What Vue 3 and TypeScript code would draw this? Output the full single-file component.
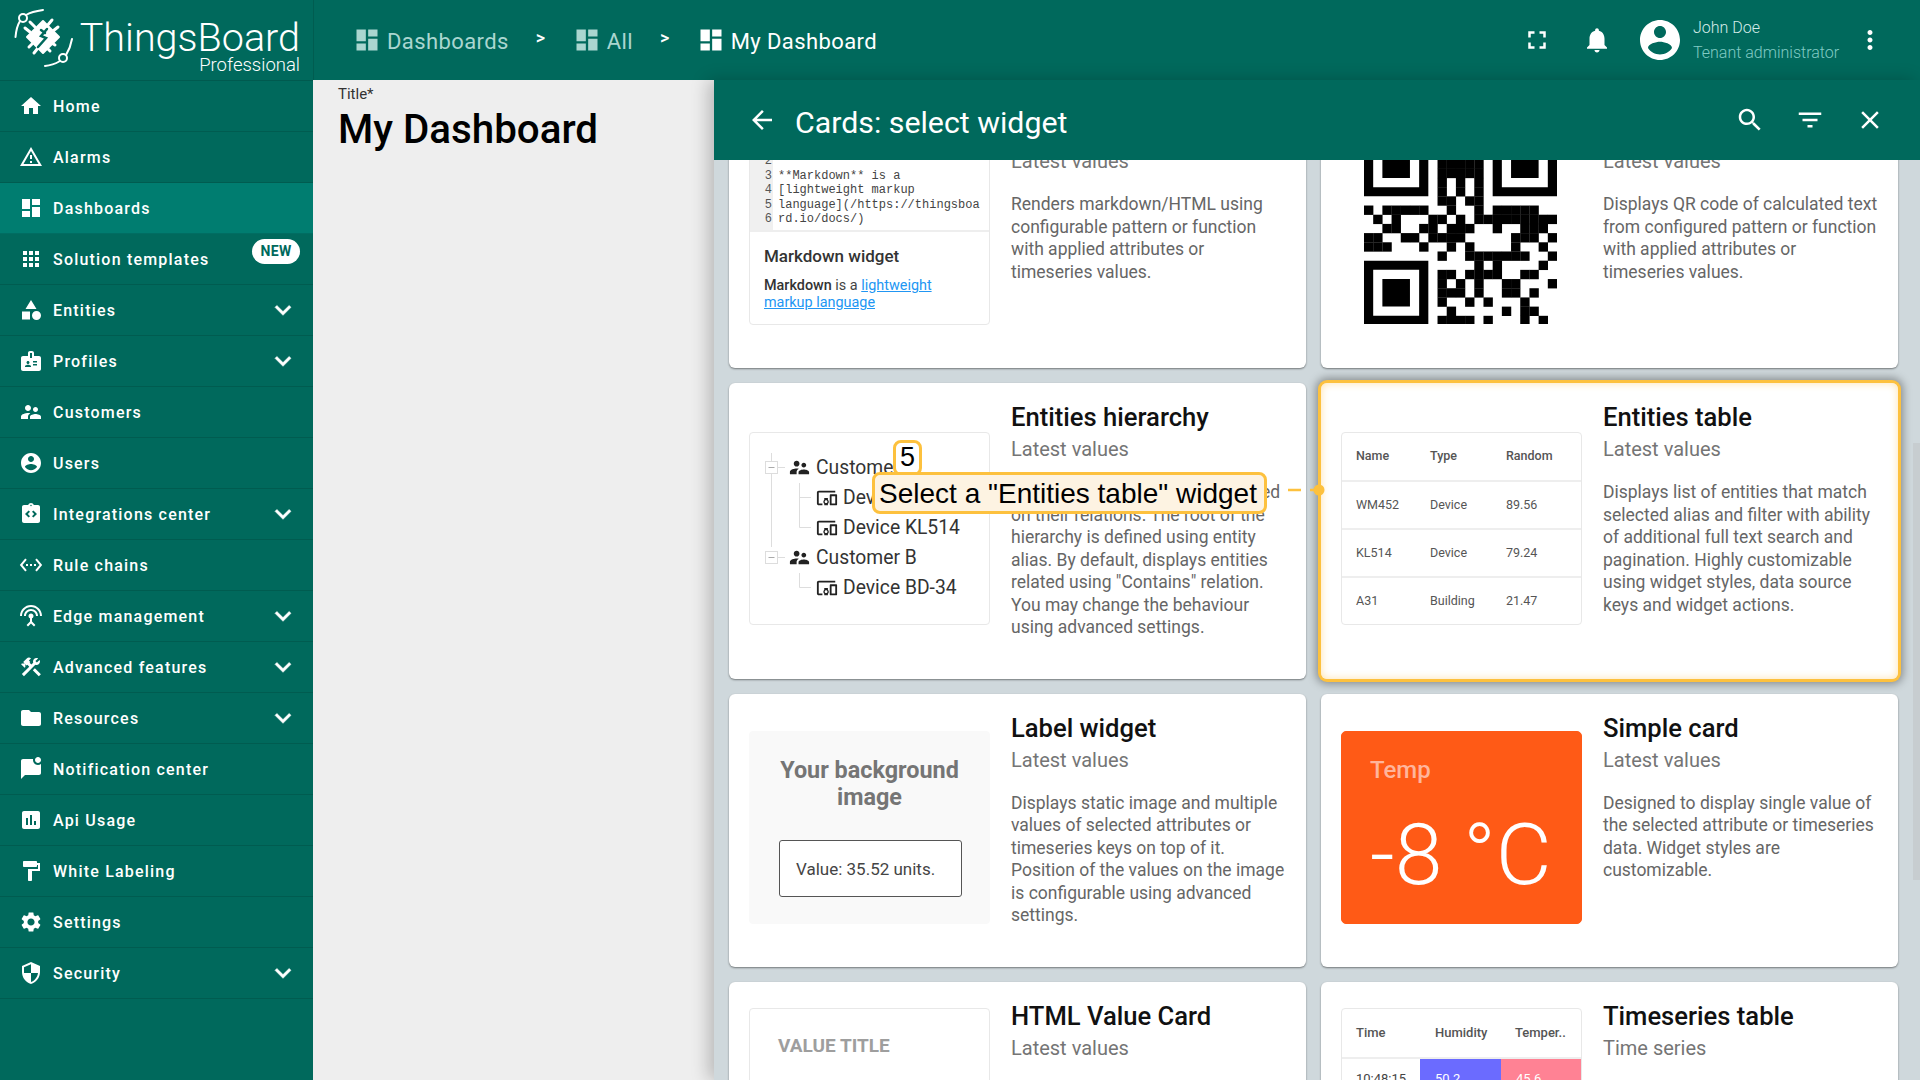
<template>
  <div class="page">
    <aside class="sidebar">
      <div class="brand">
        <svg class="logo" viewBox="14 8 60 60" fill="none" stroke="#fff" stroke-linecap="round">
          <path d="M43 10C36 11 31 12 26 15M20 21C17 26 16 31 15.5 37M45 66C51 65.5 55 64 60 61M66 55C69 50 71 45 72 39" stroke-width="2" />
          <circle cx="23" cy="18" r="4" stroke-width="2" />
          <circle cx="63" cy="58" r="4" stroke-width="2" />
          <path d="M43 21L59 37L43 53L27 37Z" fill="#fff" stroke="#fff" stroke-width="2" stroke-linejoin="round" />
          <path d="M30 22L35 27M25 28L30 32M52 20L47 26M58 27L53 31M29 47L34 42M34 53L38 48M55 45L50 42M50 51L46 47" stroke-width="3" />
          <path d="M47 29L41 36L46 38L38 47M41 30L45 33" stroke="#00695c" stroke-width="2.5" />
        </svg>
        <div class="brand-text">
          <span class="brand-name">ThingsBoard</span>
          <span class="brand-sub">Professional</span>
        </div>
      </div>
      <nav>
        <a v-for="item in menu" :key="item.label" class="nav-item" :class="{ active: item.label === 'Dashboards' }">
          <svg class="nav-icon" viewBox="0 0 24 24"><path :d="item.icon" /></svg>
          <span class="nav-label">{{ item.label }}</span>
          <span v-if="item.label === 'Solution templates'" class="new-badge">NEW</span>
          <svg v-if="item.more" class="chevron" viewBox="0 0 24 24"><path :d="icons.expand" /></svg>
        </a>
      </nav>
    </aside>

    <div class="main">
      <header class="topbar">
        <div class="crumb faded">
          <svg viewBox="0 0 24 24"><path :d="icons.dashboard" /></svg>
          <span>Dashboards</span>
        </div>
        <span class="crumb-sep">&gt;</span>
        <div class="crumb faded">
          <svg viewBox="0 0 24 24"><path :d="icons.dashboard" /></svg>
          <span>All</span>
        </div>
        <span class="crumb-sep">&gt;</span>
        <div class="crumb">
          <svg viewBox="0 0 24 24"><path :d="icons.dashboard" /></svg>
          <span>My Dashboard</span>
        </div>
        <div class="top-actions">
          <button class="icon-btn"><svg viewBox="0 0 24 24"><path :d="icons.fullscreen" /></svg></button>
          <button class="icon-btn"><svg viewBox="0 0 24 24"><path :d="icons.bell" /></svg></button>
          <svg class="avatar" viewBox="0 0 24 24"><path :d="icons.account" /></svg>
          <div class="user">
            <span class="user-name">John Doe</span>
            <span class="user-role">Tenant administrator</span>
          </div>
          <button class="icon-btn"><svg viewBox="0 0 24 24"><path :d="icons.more" /></svg></button>
        </div>
      </header>

      <div class="workspace">
        <section class="dash">
          <label>Title*</label>
          <h1>My Dashboard</h1>
        </section>

        <section class="panel">
          <div class="panel-header">
            <svg class="back" viewBox="0 0 24 24"><path :d="icons.back" /></svg>
            <h2>Cards: select widget</h2>
            <div class="panel-actions">
              <button class="icon-btn"><svg viewBox="0 0 24 24"><path :d="icons.search" /></svg></button>
              <button class="icon-btn"><svg viewBox="0 0 24 24"><path :d="icons.filter" /></svg></button>
              <button class="icon-btn"><svg viewBox="0 0 24 24"><path :d="icons.close" /></svg></button>
            </div>
          </div>

          <div class="content">
            <div class="grid">
              <article v-for="w in widgets" :key="w.title" class="card" :class="{ picked: w.kind === 'entities' }">
                <div class="preview" :class="'p-' + w.kind">
                  <template v-if="w.kind === 'markdown'">
                    <div class="md-code">
                      <div v-for="(line, i) in mdLines" :key="i" class="md-line">
                        <span class="md-num">{{ i + 1 }}</span><span>{{ line }}</span>
                      </div>
                    </div>
                    <div class="md-body">
                      <h4>Markdown widget</h4>
                      <p><b>Markdown</b> is a <a>lightweight<br />markup language</a></p>
                    </div>
                  </template>

                  <svg v-else-if="w.kind === 'qr'" class="qr" viewBox="0 0 21 21">
                    <path d="M0 0h7v7H0zM1 1v5h5V1zM2 2h3v3H2zM14 0h7v7h-7zM15 1v5h5V1zM16 2h3v3h-3zM0 14h7v7H0zM1 15v5h5v-5zM2 16h3v3H2z" fill-rule="evenodd" />
                    <rect v-for="m in qrCells" :key="m.x + '-' + m.y" :x="m.x" :y="m.y" width="1.02" height="1.02" />
                  </svg>

                  <template v-else-if="w.kind === 'tree'">
                    <svg class="tree-lines" viewBox="0 0 241 193" fill="none" stroke="#ddd">
                      <path d="M22.5 21V115M22.5 131V119M28 35.5H36M28 125.5H36M50.5 51V95.5H62M50.5 65.5H62M50.5 141V155.5H62" />
                      <rect x="16.5" y="29.5" width="12" height="12" fill="#fff" />
                      <rect x="16.5" y="119.5" width="12" height="12" fill="#fff" />
                      <path d="M19.5 35.5H25.5M19.5 125.5H25.5" stroke="#aaa" />
                    </svg>
                    <div v-for="row in treeRows" :key="row.name" class="tree-row" :class="{ child: row.child }">
                      <svg viewBox="0 0 24 24"><path :d="row.child ? icons.device : icons.customers" /></svg>
                      <span>{{ row.name }}</span>
                    </div>
                  </template>

                  <table v-else-if="w.kind === 'entities'" class="mini-table">
                    <thead><tr><th>Name</th><th>Type</th><th>Random</th></tr></thead>
                    <tbody>
                      <tr v-for="row in entityRows" :key="row[0]">
                        <td v-for="cell in row" :key="cell">{{ cell }}</td>
                      </tr>
                    </tbody>
                  </table>

                  <template v-else-if="w.kind === 'label'">
                    <div class="label-bg">Your background<br />image</div>
                    <div class="label-box">Value: 35.52 units.</div>
                  </template>

                  <template v-else-if="w.kind === 'simple'">
                    <div class="temp-label">Temp</div>
                    <div class="temp-value">-8 °C</div>
                  </template>

                  <div v-else-if="w.kind === 'html'" class="value-title">VALUE TITLE</div>

                  <template v-else-if="w.kind === 'timeseries'">
                    <div class="ts-head"><span>Time</span><span>Humidity</span><span>Temper..</span></div>
                    <div class="ts-row"><span>10:48:15</span><span class="hum">50.2</span><span class="tmp">45.6</span></div>
                  </template>
                </div>
                <div class="info">
                  <h3>{{ w.title }}</h3>
                  <div class="kind">{{ w.type }}</div>
                  <p>{{ w.desc }}</p>
                </div>
              </article>
            </div>
            <div class="thumb"></div>
          </div>

          <div class="step-badge">5</div>
          <div class="step-tip">Select a "Entities table" widget</div>
          <svg class="step-link" viewBox="0 0 46 14">
            <path d="M5 7H18M27 7H36" stroke="#fdc13e" stroke-width="2.5" />
            <circle cx="36" cy="7" r="5.5" fill="#fdc13e" />
          </svg>
        </section>
      </div>
    </div>
  </div>
</template>

<script setup lang="ts">
import { computed } from 'vue'

const icons = {
  dashboard: 'M3 13h8V3H3v10zm0 8h8v-6H3v6zm10 0h8V11h-8v10zm0-18v6h8V3h-8z',
  expand: 'M16.59 8.59L12 13.17 7.41 8.59 6 10l6 6 6-6z',
  fullscreen: 'M7 14H5v5h5v-2H7v-3zm-2-4h2V7h3V5H5v5zm12 7h-3v2h5v-5h-2v3zM14 5v2h3v3h2V5h-5z',
  bell: 'M12 22c1.1 0 2-.9 2-2h-4c0 1.1.89 2 2 2zm6-6v-5c0-3.07-1.64-5.64-4.5-6.32V4c0-.83-.67-1.5-1.5-1.5s-1.5.67-1.5 1.5v.68C7.63 5.36 6 7.92 6 11v5l-2 2v1h16v-1l-2-2z',
  account: 'M12 2C6.48 2 2 6.48 2 12s4.48 10 10 10 10-4.48 10-10S17.52 2 12 2zm0 3c1.66 0 3 1.34 3 3s-1.34 3-3 3-3-1.34-3-3 1.34-3 3-3zm0 14.2c-2.5 0-4.71-1.28-6-3.22.03-1.99 4-3.08 6-3.08 1.99 0 5.97 1.09 6 3.08-1.29 1.94-3.5 3.22-6 3.22z',
  more: 'M12 8c1.1 0 2-.9 2-2s-.9-2-2-2-2 .9-2 2 .9 2 2 2zm0 2c-1.1 0-2 .9-2 2s.9 2 2 2 2-.9 2-2-.9-2-2-2zm0 6c-1.1 0-2 .9-2 2s.9 2 2 2 2-.9 2-2-.9-2-2-2z',
  back: 'M20 11H7.83l5.59-5.59L12 4l-8 8 8 8 1.41-1.41L7.83 13H20v-2z',
  search: 'M15.5 14h-.79l-.28-.27C15.41 12.59 16 11.11 16 9.5 16 5.91 13.09 3 9.5 3S3 5.91 3 9.5 5.91 16 9.5 16c1.61 0 3.09-.59 4.23-1.57l.27.28v.79l5 4.99L20.49 19l-4.99-5zm-6 0C7.01 14 5 11.99 5 9.5S7.01 5 9.5 5 14 7.01 14 9.5 11.99 14 9.5 14z',
  filter: 'M10 18h4v-2h-4v2zM3 6v2h18V6H3zm3 7h12v-2H6v2z',
  close: 'M19 6.41L17.59 5 12 10.59 6.41 5 5 6.41 10.59 12 5 17.59 6.41 19 12 13.41 17.59 19 19 17.59 13.41 12z',
  customers: 'M16.5 12c1.38 0 2.49-1.12 2.49-2.5S17.88 7 16.5 7C15.12 7 14 8.12 14 9.5s1.12 2.5 2.5 2.5zM9 11c1.66 0 2.99-1.34 2.99-3S10.66 5 9 5C7.34 5 6 6.34 6 8s1.34 3 3 3zm7.5 3c-1.83 0-5.5.92-5.5 2.75V19h11v-2.25c0-1.83-3.67-2.75-5.5-2.75zM9 13c-2.33 0-7 1.17-7 3.5V19h7v-2.25c0-.85.33-2.34 2.37-3.47C10.5 13.1 9.66 13 9 13z',
  device: 'M3 6h18V4H3c-1.1 0-2 .9-2 2v12c0 1.1.9 2 2 2h4v-2H3V6zm10 6H9v1.78c-.61.55-1 1.33-1 2.22s.39 1.67 1 2.22V20h4v-1.78c.61-.55 1-1.34 1-2.22s-.39-1.67-1-2.22V12zm-2 5.5c-.83 0-1.5-.67-1.5-1.5s.67-1.5 1.5-1.5 1.5.67 1.5 1.5-.67 1.5-1.5 1.5zM22 8h-6c-.5 0-1 .5-1 1v10c0 .5.5 1 1 1h6c.5 0 1-.5 1-1V9c0-.5-.5-1-1-1zm-1 10h-4v-8h4v8z',
}

const menu = [
  { label: 'Home', icon: 'M10 20v-6h4v6h5v-8h3L12 3 2 12h3v8z' },
  { label: 'Alarms', icon: 'M12 5.99L19.53 19H4.47L12 5.99M12 2L1 21h22L12 2zm1 14h-2v2h2v-2zm0-6h-2v4h2v-4z' },
  { label: 'Dashboards', icon: icons.dashboard },
  { label: 'Solution templates', icon: 'M4 8h4V4H4v4zm6 12h4v-4h-4v4zm-6 0h4v-4H4v4zm0-6h4v-4H4v4zm6 0h4v-4h-4v4zm6-10v4h4V4h-4zm-6 4h4V4h-4v4zm6 6h4v-4h-4v4zm0 6h4v-4h-4v4z' },
  { label: 'Entities', more: true, icon: 'M12 2l-5.5 9h11zM17.5 13a4.5 4.5 0 1 0 0 9 4.5 4.5 0 0 0 0-9zM3 13.5h8v8H3z' },
  { label: 'Profiles', more: true, icon: 'M20 7h-5V4c0-1.1-.9-2-2-2h-2c-1.1 0-2 .9-2 2v3H4c-1.1 0-2 .9-2 2v11c0 1.1.9 2 2 2h16c1.1 0 2-.9 2-2V9c0-1.1-.9-2-2-2zM9 12c.83 0 1.5.67 1.5 1.5S9.83 15 9 15s-1.5-.67-1.5-1.5S8.17 12 9 12zm3 6H6v-.75c0-1 2-1.5 3-1.5s3 .5 3 1.5V18zm1-9h-2V4h2v5zm5 7.5h-4V15h4v1.5zm0-3h-4V12h4v1.5z' },
  { label: 'Customers', icon: icons.customers },
  { label: 'Users', icon: icons.account },
  { label: 'Integrations center', more: true, icon: 'M19 3h-4.18C14.4 1.84 13.3 1 12 1s-2.4.84-2.82 2H5c-1.1 0-2 .9-2 2v14c0 1.1.9 2 2 2h14c1.1 0 2-.9 2-2V5c0-1.1-.9-2-2-2zm-7-.25c.41 0 .75.34.75.75s-.34.75-.75.75-.75-.34-.75-.75.34-.75.75-.75zM11 14.17l-1.41 1.42L6 12l3.59-3.59L11 9.83 8.83 12 11 14.17zm3.41 1.42L13 14.17 15.17 12 13 9.83l1.41-1.42L18 12l-3.59 3.59z' },
  { label: 'Rule chains', icon: 'M7.77 6.76L6.23 5.48.82 12l5.41 6.52 1.54-1.28L3.42 12l4.35-5.24zM7 13h2v-2H7v2zm10-2h-2v2h2v-2zm-6 2h2v-2h-2v2zm6.77-7.52l-1.54 1.28L20.58 12l-4.35 5.24 1.54 1.28L23.18 12l-5.41-6.52z' },
  { label: 'Edge management', more: true, icon: 'M12 5c-3.87 0-7 3.13-7 7h2c0-2.76 2.24-5 5-5s5 2.24 5 5h2c0-3.87-3.13-7-7-7zm1 9.29c.88-.39 1.5-1.26 1.5-2.29 0-1.38-1.12-2.5-2.5-2.5S9.5 10.62 9.5 12c0 1.02.62 1.9 1.5 2.29v3.3L7.59 21 9 22.41l3-3 3 3L16.41 21 13 17.59v-3.3zM12 1C5.93 1 1 5.93 1 12h2c0-4.97 4.03-9 9-9s9 4.03 9 9h2c0-6.07-4.93-11-11-11z' },
  { label: 'Advanced features', more: true, icon: 'M13.78 15.3l6 6 2.11-2.16-5.99-5.99zM17.5 10c1.93 0 3.5-1.57 3.5-3.5 0-.58-.16-1.12-.41-1.6l-2.7 2.7-1.49-1.49 2.7-2.7c-.48-.25-1.02-.41-1.6-.41C15.57 3 14 4.57 14 6.5c0 .41.08.8.21 1.16l-1.85 1.85-1.78-1.78.71-.71-1.41-1.41L12 3.49c-1.17-1.17-3.07-1.17-4.24 0L4.22 7.03l1.41 1.41H2.81l-.71.71 3.54 3.54.71-.71V9.15l1.41 1.41.71-.71 1.78 1.78-7.41 7.41 2.12 2.12L16.34 9.79c.36.13.75.21 1.16.21z' },
  { label: 'Resources', more: true, icon: 'M10 4H4c-1.1 0-1.99.9-1.99 2L2 18c0 1.1.9 2 2 2h16c1.1 0 2-.9 2-2V8c0-1.1-.9-2-2-2h-8l-2-2z' },
  { label: 'Notification center', icon: 'M22 6.98V16c0 1.1-.9 2-2 2H6l-4 4V4c0-1.1.9-2 2-2h10.1c-.06.32-.1.66-.1 1 0 2.76 2.24 5 5 5 1.13 0 2.16-.39 3-1.02zM16 3c0 1.66 1.34 3 3 3s3-1.34 3-3-1.34-3-3-3-3 1.34-3 3z' },
  { label: 'Api Usage', icon: 'M19 3H5c-1.1 0-2 .9-2 2v14c0 1.1.9 2 2 2h14c1.1 0 2-.9 2-2V5c0-1.1-.9-2-2-2zM9 17H7v-7h2v7zm4 0h-2V7h2v10zm4 0h-2v-4h2v4z' },
  { label: 'White Labeling', icon: 'M18 4V3c0-.55-.45-1-1-1H5c-.55 0-1 .45-1 1v4c0 .55.45 1 1 1h12c.55 0 1-.45 1-1V6h1v4H9v11c0 .55.45 1 1 1h2c.55 0 1-.45 1-1v-9h8V4h-3z' },
  { label: 'Settings', icon: 'M19.14 12.94c.04-.3.06-.61.06-.94 0-.32-.02-.64-.07-.94l2.03-1.58c.18-.14.23-.41.12-.61l-1.92-3.32c-.12-.22-.37-.29-.59-.22l-2.39.96c-.5-.38-1.03-.7-1.62-.94l-.36-2.54c-.04-.24-.24-.41-.48-.41h-3.84c-.24 0-.43.17-.47.41l-.36 2.54c-.59.24-1.13.57-1.62.94l-2.39-.96c-.22-.08-.47 0-.59.22L2.74 8.87c-.12.21-.08.47.12.61l2.03 1.58c-.05.3-.09.63-.09.94s.02.64.07.94l-2.03 1.58c-.18.14-.23.41-.12.61l1.92 3.32c.12.22.37.29.59.22l2.39-.96c.5.38 1.03.7 1.62.94l.36 2.54c.05.24.24.41.48.41h3.84c.24 0 .44-.17.47-.41l.36-2.54c.59-.24 1.13-.56 1.62-.94l2.39.96c.22.08.47 0 .59-.22l1.92-3.32c.12-.22.07-.47-.12-.61l-2.01-1.58zM12 15.6c-1.98 0-3.6-1.62-3.6-3.6s1.62-3.6 3.6-3.6 3.6 1.62 3.6 3.6-1.62 3.6-3.6 3.6z' },
  { label: 'Security', more: true, icon: 'M12 1L3 5v6c0 5.55 3.84 10.74 9 12 5.16-1.26 9-6.45 9-12V5l-9-4zm0 10.99h7c-.53 4.12-3.28 7.79-7 8.94V12H5V6.3l7-3.11v8.8z' },
]

const widgets = [
  { kind: 'markdown', title: 'Markdown/HTML Card', type: 'Latest values', desc: 'Renders markdown/HTML using configurable pattern or function with applied attributes or timeseries values.' },
  { kind: 'qr', title: 'QR Code', type: 'Latest values', desc: 'Displays QR code of calculated text from configured pattern or function with applied attributes or timeseries values.' },
  { kind: 'tree', title: 'Entities hierarchy', type: 'Latest values', desc: 'Displays the entity hierarchy based on their relations. The root of the hierarchy is defined using entity alias. By default, displays entities related using "Contains" relation. You may change the behaviour using advanced settings.' },
  { kind: 'entities', title: 'Entities table', type: 'Latest values', desc: 'Displays list of entities that match selected alias and filter with ability of additional full text search and pagination. Highly customizable using widget styles, data source keys and widget actions.' },
  { kind: 'label', title: 'Label widget', type: 'Latest values', desc: 'Displays static image and multiple values of selected attributes or timeseries keys on top of it. Position of the values on the image is configurable using advanced settings.' },
  { kind: 'simple', title: 'Simple card', type: 'Latest values', desc: 'Designed to display single value of the selected attribute or timeseries data. Widget styles are customizable.' },
  { kind: 'html', title: 'HTML Value Card', type: 'Latest values', desc: 'Renders HTML with value of the selected attribute or timeseries key.' },
  { kind: 'timeseries', title: 'Timeseries table', type: 'Time series', desc: 'Displays time series data in a table with one row per timestamp.' },
]

const mdLines = ['', '', '**Markdown** is a', '[lightweight markup', 'language](/https://thingsboa', 'rd.io/docs/)']

const treeRows = [
  { name: 'Customer A', child: false },
  { name: 'Device WM452', child: true },
  { name: 'Device KL514', child: true },
  { name: 'Customer B', child: false },
  { name: 'Device BD-34', child: true },
]

const entityRows = [
  ['WM452', 'Device', '89.56'],
  ['KL514', 'Device', '79.24'],
  ['A31', 'Building', '21.47'],
]

// data modules of the qr picture, one list of columns per row
const qrRows: number[][] = [
  [8, 9, 10, 11, 12], [8, 9, 10, 11, 12], [8, 9, 10, 11, 12], [8, 9, 10, 11, 12], [8, 9, 10, 11, 12],
  [8, 10, 12], [8, 10, 12],
  [8, 9, 11, 12],
  [0, 2, 3, 4, 5, 6, 9, 12, 14, 15, 16, 17, 18],
  [1, 3, 7, 8, 10, 12, 13, 14, 15, 16, 17, 18, 19, 20],
  [2, 3, 6, 7, 9, 10, 11, 14, 17, 18, 19],
  [0, 1, 4, 5, 7, 8, 9, 10, 16, 17, 18, 20],
  [0, 1, 2, 6, 9, 11, 16, 19],
  [8, 11, 12, 13, 14, 15, 16, 17, 20],
  [12, 14, 19],
  [8, 9, 11, 12, 13, 14, 17, 18],
  [8, 10, 12, 15, 16, 20],
  [8, 9, 10, 12, 15, 16, 18],
  [8, 11, 13, 17],
  [9, 15, 17, 18],
  [8, 9, 10, 11, 13, 17, 19],
]

const qrCells = computed(() =>
  qrRows.flatMap((cols, y) => cols.map((x) => ({ x, y }))),
)
</script>

<style>
html, body { margin: 0; height: 100%; overflow: hidden; }
</style>

<style scoped>
.page { display: flex; width: 1920px; height: 1080px; overflow: hidden; font-family: Roboto, "Liberation Sans", sans-serif; background: #eee; }
.sidebar { width: 313px; flex: none; background: #00695c; color: #fff; }
.brand { height: 81px; box-sizing: border-box; display: flex; align-items: flex-start; border-bottom: 1px solid rgba(0,0,0,0.14); padding: 8px 13px 0 14px; gap: 6px; }
.logo { width: 60px; height: 60px; flex: none; }
.brand-text { flex: 1; min-width: 0; display: flex; flex-direction: column; align-items: flex-end; font-weight: 300; white-space: nowrap; }
.brand-name { font-size: 39.5px; line-height: 44px; margin-top: 8px; }
.brand-sub { font-size: 18.5px; line-height: 20px; margin-top: -5px; }
.nav-item { display: flex; align-items: center; height: 51px; box-sizing: border-box; border-bottom: 1px solid rgba(0,0,0,0.12); padding: 0 18px 0 19px; position: relative; }
.nav-item.active { background: #007d70; }
.nav-icon { width: 24px; height: 24px; fill: #fff; flex: none; }
.nav-label { margin-left: 10px; font-size: 16px; font-weight: 500; letter-spacing: 1.2px; flex: 1; }
.chevron { width: 32px; height: 32px; fill: #fff; flex: none; margin-right: -4px; stroke: #fff; stroke-width: 0.4; }
.new-badge { position: absolute; left: 252px; top: 5px; width: 48px; height: 25px; border-radius: 13px; background: #fff; color: #00695c; font-size: 14px; font-weight: 700; line-height: 25px; text-align: center; letter-spacing: 0.4px; }

.main { flex: 1; min-width: 0; display: flex; flex-direction: column; }
.topbar { height: 80px; flex: none; background: #00695c; color: #fff; display: flex; align-items: center; padding: 0 20px 0 43px; box-shadow: inset 1px 0 0 rgba(0,0,0,0.12); }
.crumb { display: flex; align-items: center; gap: 9px; font-size: 22px; letter-spacing: 0.4px; padding-top: 2px; }
.crumb svg { width: 28px; height: 28px; fill: currentColor; margin-left: -3px; margin-right: -3px; margin-top: -2px; }
.crumb.faded { color: #aad6d0; }
.crumb-sep { font-size: 18px; font-weight: 500; margin: -6px 30.5px 0 27px; color: #fff; }
.top-actions { margin-left: auto; display: flex; align-items: center; }
.icon-btn { width: 60px; height: 48px; padding: 0; border: none; background: none; display: flex; align-items: center; justify-content: center; }
.icon-btn svg { width: 30px; height: 30px; fill: #fff; }
.avatar { width: 48px; height: 48px; fill: #fff; margin-left: 9px; }
.user { width: 147px; margin-left: 9px; display: flex; flex-direction: column; gap: 5px; font-weight: 300; font-size: 16px; line-height: 20px; white-space: nowrap; }
.user-name { color: #d6ece9; }
.user-role { color: #80cbc4; }

.workspace { flex: 1; min-height: 0; display: flex; }
.dash { flex: 1; background: #eee; padding: 5px 25px; color: #000; }
.dash label { display: block; font-size: 15px; line-height: 17px; color: #333; margin-top: 1px; }
.dash h1 { margin: 2px 0 0; font-size: 40.3px; line-height: 50px; font-weight: 500; }

.panel { width: 1206px; flex: none; display: flex; flex-direction: column; position: relative; box-shadow: -6px 0 16px rgba(0,0,0,0.22); }
.panel-header { height: 80px; flex: none; background: #00695c; color: #fff; display: flex; align-items: center; padding: 0 20px 0 33px; position: relative; z-index: 2; }
.back { width: 30px; height: 30px; fill: #fff; flex: none; }
.panel-header h2 { margin: 4px 0 0 18px; font-size: 30.3px; font-weight: 400; }
.panel-actions { margin-left: auto; display: flex; margin-top: -1px; }

.content { flex: 1; min-height: 0; overflow: hidden; background: #cfd8dc; position: relative; }
.grid { display: grid; grid-template-columns: 577px 577px; gap: 15px; padding: 0 15px; margin-top: -65px; }
.card { display: flex; align-items: center; gap: 21px; min-height: 273px; box-sizing: border-box; padding: 19px 20px 24px; background: #fff; border-radius: 6px; box-shadow: 0 1px 2px rgba(0,0,0,0.45); }
.card.picked { box-shadow: inset 0 0 9px #ffe3ad, 0 0 0 3px #fdc13e, 0 0 9px 5px rgba(0,0,0,0.35); }
.info { flex: 1; min-width: 0; align-self: flex-start; margin-top: -1px; padding-bottom: 16px; }
.info h3 { margin: 0; font-size: 25.6px; line-height: 32px; font-weight: 500; color: #111; }
.kind { font-size: 20px; line-height: 32px; color: #757575; }
.info p { margin: 16px 0 0; font-size: 17.5px; line-height: 22.5px; color: #666; }

.preview { width: 241px; height: 193px; flex: none; box-sizing: border-box; background: #fff; border: 1px solid #e8e8e8; border-radius: 4px; position: relative; overflow: hidden; color: #444; }

.p-markdown, .p-qr { margin-top: -2px; }
.md-code { padding: 7px 0 3px; border-bottom: 2px solid #eee; background: linear-gradient(90deg, #f0f0f0 23px, #fff 23px); font-family: "Liberation Mono", monospace; font-size: 12px; line-height: 14.5px; white-space: pre; }
.md-line { height: 14.5px; }
.md-num { display: inline-block; width: 22px; margin-right: 6px; text-align: right; color: #555; }
.md-body { padding: 14px 14px 0; font-size: 14.4px; line-height: 17.5px; }
.md-body h4 { margin: 0 0 11px; font-size: 17px; line-height: 20px; font-weight: 500; color: #333; }
.md-body p { margin: 0; }
.md-body b { font-weight: 500; color: #333; }
.md-body a { color: #2196f3; text-decoration: underline; }

.p-qr { border-color: transparent; }
.qr { position: absolute; left: 22px; top: -1px; width: 193px; height: 193px; fill: #000; }

.p-tree { padding-top: 20px; }
.tree-lines { position: absolute; left: -1px; top: -1px; width: 241px; height: 193px; }
.tree-row { height: 30px; display: flex; align-items: center; gap: 5px; padding-left: 38px; font-size: 19.3px; color: #333; position: relative; white-space: nowrap; }
.tree-row svg { width: 23px; height: 23px; fill: #222; flex: none; }
.tree-row.child { padding-left: 66px; }
.tree-row.child svg { width: 22px; height: 22px; }

.mini-table { width: 100%; border-collapse: collapse; font-size: 12.5px; table-layout: fixed; color: #555; margin-top: -1px; }
.mini-table th { text-align: left; font-weight: 500; height: 48px; border-bottom: 2px solid #eee; }
.mini-table td { height: 46px; border-bottom: 2px solid #eee; }
.mini-table tr:last-child td { border-bottom: none; }
.mini-table th, .mini-table td { padding: 0; }
.mini-table th:nth-child(1), .mini-table td:nth-child(1) { padding-left: 14px; width: 74px; }
.mini-table th:nth-child(2), .mini-table td:nth-child(2) { width: 76px; }

.p-label { background: #f9f9f9; border-color: #f9f9f9; }
.label-bg { text-align: center; font-size: 23.4px; line-height: 27px; font-weight: 700; color: #757575; margin-top: 25px; }
.label-box { box-sizing: border-box; width: 183px; height: 57px; margin: 29px 0 0 29px; border: 1.5px solid #555; border-radius: 3px; background: #fff; padding-left: 16px; font-size: 17px; line-height: 56px; color: #444; white-space: nowrap; }

.p-simple { background: #ff5a16; border-color: #ff5a16; border-radius: 5px; color: #fff; padding: 0 28px; }
.temp-label { font-size: 24px; line-height: 30px; font-weight: 500; color: #ffb59c; margin-top: 23px; }
.temp-value { font-size: 86px; font-weight: 300; line-height: 90px; margin-top: 25px; white-space: nowrap; }

.p-html, .p-timeseries { height: 246px; align-self: flex-start; margin-top: 7px; }
.p-html { border-width: 1.5px; }
.value-title { font-size: 19px; font-weight: 700; color: #9e9e9e; padding: 25px 0 0 28px; }

.p-timeseries { font-size: 13px; }
.ts-head, .ts-row { display: grid; grid-template-columns: 78px 81px 1fr; }
.ts-head { height: 48px; align-items: center; font-weight: 500; border-bottom: 2px solid #eee; color: #555; }
.ts-head span:first-child, .ts-row span:first-child { padding-left: 14px; }
.ts-head span:nth-child(2) { padding-left: 15px; }
.ts-head span:nth-child(3) { padding-left: 14px; }
.ts-row { height: 48px; line-height: 40px; }
.hum { background: #6b6bff; color: #fff; padding-left: 15px; }
.tmp { background: #ff8294; color: #fff; padding-left: 15px; }

.thumb { position: absolute; right: 0; top: 283px; width: 7px; height: 437px; background: #c7cdd0; }

.step-badge { position: absolute; left: 179px; top: 360px; width: 29px; height: 36px; box-sizing: border-box; border: 3px solid #fdc13e; border-radius: 8px; background: #fff; text-align: center; font-family: "Liberation Sans", sans-serif; font-size: 27px; line-height: 29px; color: #000; z-index: 3; }
.step-tip { position: absolute; left: 158px; top: 392px; height: 42px; width: 395px; box-sizing: border-box; border: 3px solid #fdc13e; border-radius: 8px; background: #fdf3e2; padding-right: 3px; text-align: center; font-family: "Liberation Sans", sans-serif; font-size: 28px; line-height: 37px; color: #000; white-space: nowrap; z-index: 3; }
.step-link { position: absolute; left: 569px; top: 403px; width: 46px; height: 14px; z-index: 3; }
</style>
